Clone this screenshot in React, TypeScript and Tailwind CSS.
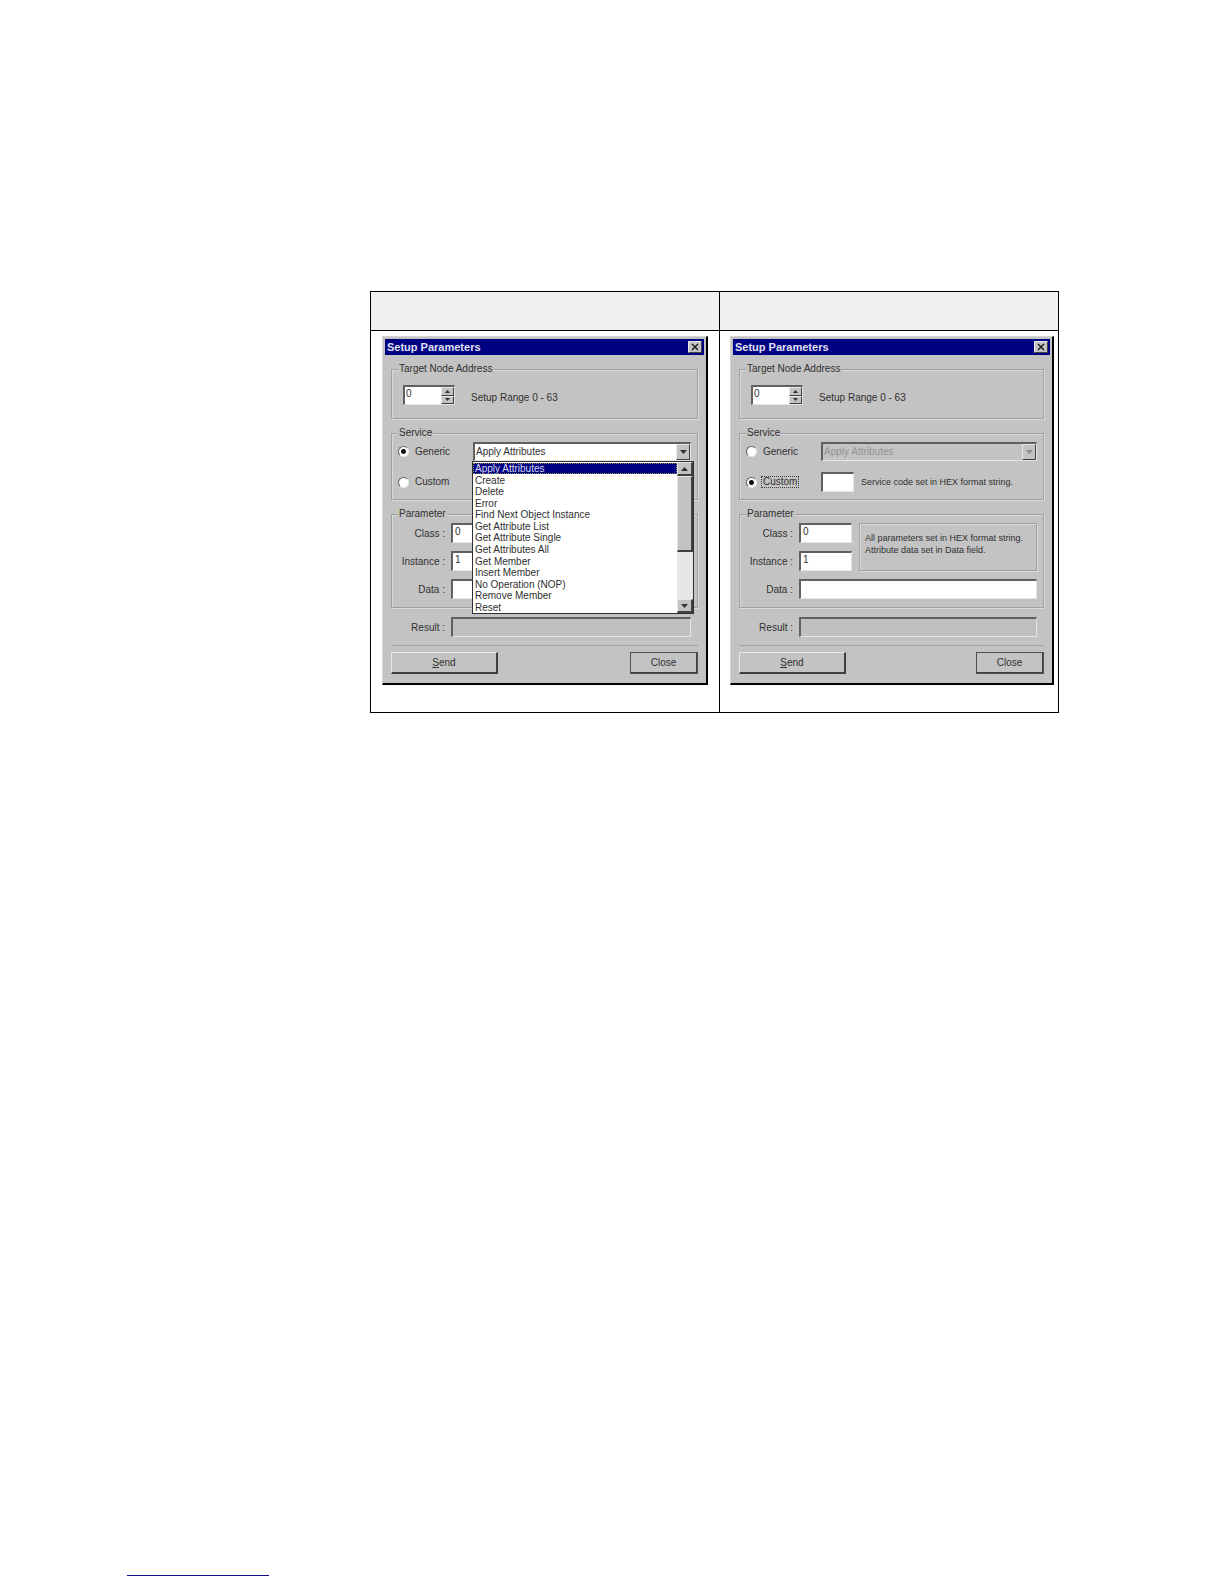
import { useId, useState } from 'react';
import clsx from 'clsx';

type Mode = 'generic' | 'custom';

const services = [
  'Apply Attributes',
  'Create',
  'Delete',
  'Error',
  'Find Next Object Instance',
  'Get Attribute List',
  'Get Attribute Single',
  'Get Attributes All',
  'Get Member',
  'Insert Member',
  'No Operation (NOP)',
  'Remove Member',
  'Reset',
];

const sunken =
  'border border-t-2 border-l-2 border-t-[#606060] border-l-[#606060] border-r-[#e4e4e4] border-b-[#e4e4e4]';
const raised =
  'border border-t-[#e8e8e8] border-l-[#e8e8e8] border-r-[#404040] border-b-[#404040] bg-[#c3c3c3]';
const etched = 'border border-[#a0a0a0] shadow-[inset_1px_1px_0_#dadada,1px_1px_0_#dadada]';
const group = 'min-w-0 px-1.5';
const groupLegend = 'h-3 bg-[#c3c3c3] px-px leading-3';
const field = 'h-5 min-w-0 bg-white pl-0.5 pb-1 text-[10px] leading-3 outline-none';
const fieldLabel = 'pt-0.5 pr-1.5 text-right';

function Arrow({ up = false, small = false }: { up?: boolean; small?: boolean }) {
  return (
    <svg viewBox="0 0 7 4" className={small ? 'h-[3px] w-[5px]' : 'h-1 w-[7px]'} fill="currentColor">
      <path d={up ? 'M0 4 L3.5 0 L7 4Z' : 'M0 0 L3.5 4 L7 0Z'} />
    </svg>
  );
}

function TitleBar() {
  return (
    <div className="flex h-4 items-center justify-between bg-[#000082] px-0.5">
      <h2 className="text-[11px] leading-4 font-bold text-[#e0e0f4]">Setup Parameters</h2>
      <button type="button" className={clsx('flex h-3 w-[14px] items-center justify-center text-[#202020]', raised)}>
        <svg viewBox="0 0 8 8" className="h-2 w-2" stroke="currentColor" strokeWidth="1.5">
          <path d="M1 1 L7 7 M7 1 L1 7" />
        </svg>
      </button>
    </div>
  );
}

function ServiceList({ selected, onSelect }: { selected: string; onSelect: (s: string) => void }) {
  return (
    <div className="absolute top-full -right-[3px] -left-px z-10 flex h-[153px] border border-[#303030] bg-white">
      <ul role="listbox" className="flex flex-1 flex-col justify-between pt-px">
        {services.map((service) => (
          <li
            key={service}
            role="option"
            aria-selected={service === selected}
            onClick={() => onSelect(service)}
            className={clsx(
              'h-[11px] pl-0.5 leading-[11px]',
              service === selected && 'bg-[#000082] text-[#d8d8f0] outline-1 -outline-offset-1 outline-dotted outline-[#8c8c50]',
            )}
          >
            {service}
          </li>
        ))}
      </ul>
      <div className="flex w-4 flex-col bg-[#e6e6e6]">
        <button type="button" className={clsx('flex h-[14px] items-center justify-center border-r-2 border-b-2', raised)}>
          <Arrow up />
        </button>
        <div className={clsx('h-[76px] border-r-2 border-b-2', raised)} />
        <button type="button" className={clsx('mt-auto flex h-[14px] items-center justify-center border-r-2 border-b-2', raised)}>
          <Arrow />
        </button>
      </div>
    </div>
  );
}

function SetupDialog({ initialMode }: { initialMode: Mode }) {
  const id = useId();
  const [mode, setMode] = useState<Mode>(initialMode);
  const [service, setService] = useState(services[0]);
  const custom = mode === 'custom';

  const radio =
    'h-[11px] w-[11px] shrink-0 appearance-none rounded-full border border-[#e8e8e8] border-t-[#606060] border-l-[#606060] bg-white checked:bg-[radial-gradient(circle,#101010_0_2px,#ffffff_3px)]';

  return (
    <form className="w-full border-t border-r-2 border-b-2 border-l border-t-[#d4d4d4] border-r-black border-b-black border-l-[#d4d4d4] bg-[#c3c3c3] p-0.5 pb-0 text-left text-[10px] leading-3 text-[#303030]">
      <TitleBar />

      <div className="px-1.5 pt-2 pb-[9px]">
        <fieldset className={clsx(group, etched)}>
          <legend className={groupLegend}>Target Node Address</legend>
          <div className="flex items-center gap-4 pt-2.5 pb-[13px] pl-[5px]">
            <div className={clsx('flex h-5 w-[52px] bg-white', sunken)}>
              <input id={`${id}-node`} defaultValue="0" className="w-0 min-w-0 flex-1 pb-1 pl-px leading-3 outline-none" />
              <div className="flex w-[13px] flex-col">
                <button type="button" className={clsx('flex flex-1 items-center justify-center', raised)}>
                  <Arrow up small />
                </button>
                <button type="button" className={clsx('flex flex-1 items-center justify-center', raised)}>
                  <Arrow small />
                </button>
              </div>
            </div>
            <label htmlFor={`${id}-node`} className="pt-1.5">Setup Range 0 - 63</label>
          </div>
        </fieldset>

        <fieldset className={clsx('mt-2', group, etched)}>
          <legend className={groupLegend}>Service</legend>
          <div className="grid grid-cols-[75px_minmax(0,1fr)] gap-y-[11px] pt-[3px] pb-[7px]">
            <label className="flex items-center gap-1">
              <input type="radio" name={`${id}-mode`} checked={!custom} onChange={() => setMode('generic')} className={radio} />
              <span className="px-0.5">Generic</span>
            </label>
            <div className="relative">
              <select
                value={service}
                disabled={custom}
                onChange={(e) => setService(e.target.value)}
                className={clsx(
                  'block h-[19px] w-full appearance-none pl-px text-[10px] opacity-100 outline-none',
                  sunken,
                  custom ? 'bg-[#c3c3c3] text-[#949494]' : 'bg-white',
                )}
              >
                {services.map((s) => (
                  <option key={s}>{s}</option>
                ))}
              </select>
              <span
                className={clsx(
                  'pointer-events-none absolute top-0.5 right-px flex h-4 w-[14px] items-center justify-center',
                  raised,
                  custom && 'text-[#8c8c8c]',
                )}
              >
                <Arrow />
              </span>
              {!custom && <ServiceList selected={service} onSelect={setService} />}
            </div>

            <label className="flex items-center gap-1">
              <input type="radio" name={`${id}-mode`} checked={custom} onChange={() => setMode('custom')} className={radio} />
              <span className={clsx('px-0.5', custom && 'outline-1 -outline-offset-1 outline-dotted outline-[#404040]')}>
                Custom
              </span>
            </label>
            <div className="flex h-5 items-center gap-[7px]">
              {custom && (
                <>
                  <input id={`${id}-code`} className={clsx('w-[33px]', field, sunken)} />
                  <label htmlFor={`${id}-code`} className="text-[9px] leading-3 whitespace-nowrap">
                    Service code set in HEX format string.
                  </label>
                </>
              )}
            </div>
          </div>
        </fieldset>

        <fieldset className={clsx('mt-2', group, etched)}>
          <legend className={groupLegend}>Parameter</legend>
          <div className="grid grid-cols-[53px_53px_minmax(0,1fr)] items-center gap-y-2 pt-[3px] pb-2">
            <label htmlFor={`${id}-class`} className={fieldLabel}>Class :</label>
            <input id={`${id}-class`} defaultValue="0" className={clsx(field, sunken)} />
            <div className={clsx('row-span-2 ml-[7px] h-12 pt-2 pl-[5px]', etched)}>
              {custom && (
                <p className="text-[9px] leading-3 whitespace-nowrap">
                  All parameters set in HEX format string.
                  <br />
                  Attribute data set in Data field.
                </p>
              )}
            </div>
            <label htmlFor={`${id}-instance`} className={fieldLabel}>Instance :</label>
            <input id={`${id}-instance`} defaultValue="1" className={clsx(field, sunken)} />
            <label htmlFor={`${id}-data`} className={fieldLabel}>Data :</label>
            <input id={`${id}-data`} className={clsx('col-span-2', field, sunken)} />
          </div>
        </fieldset>

        <div className="mt-[9px] grid grid-cols-[53px_minmax(0,1fr)] items-center px-[7px]">
          <label htmlFor={`${id}-result`} className={fieldLabel}>Result :</label>
          <input id={`${id}-result`} readOnly className={clsx('h-5 min-w-0 bg-[#c0c0c0] outline-none', sunken)} />
        </div>

        <hr className="mt-2 border-[#a4a4a4]" />

        <div className="mt-1.5 flex justify-between">
          <button type="button" className={clsx('h-[22px] w-[107px] border-r-2 border-b-2', raised)}>
            <span className="underline">S</span>end
          </button>
          <button type="button" className={clsx('h-[22px] w-[68px] border-r-2 border-b-2 outline-1 -outline-offset-1 outline-[#505050]', raised)}>
            Close
          </button>
        </div>
      </div>
    </form>
  );
}

export default function App() {
  return (
    <div className="flex min-h-screen flex-col bg-white font-['Liberation_Sans',Arial,sans-serif]">
      <main className="flex-1 pt-[291px] pr-[165px] pl-[370px]">
        <table className="w-full table-fixed border-collapse border border-black">
          <colgroup>
            <col className="w-[349px]" />
            <col />
          </colgroup>
          <thead>
            <tr className="h-[39px] bg-[#f0f0f0]">
              <th className="border border-black" />
              <th className="border border-black" />
            </tr>
          </thead>
          <tbody>
            <tr className="align-top">
              <td className="border border-black px-[11px] pt-[5px] pb-[27px]">
                <SetupDialog initialMode="generic" />
              </td>
              <td className="border border-black pt-[5px] pr-1 pb-[27px] pl-2.5">
                <SetupDialog initialMode="custom" />
              </td>
            </tr>
          </tbody>
        </table>
      </main>
      <footer className="pb-2 pl-[127px]">
        <a href="#" className="block h-4 w-[142px] border-b border-[#10108a]" />
      </footer>
    </div>
  );
}
